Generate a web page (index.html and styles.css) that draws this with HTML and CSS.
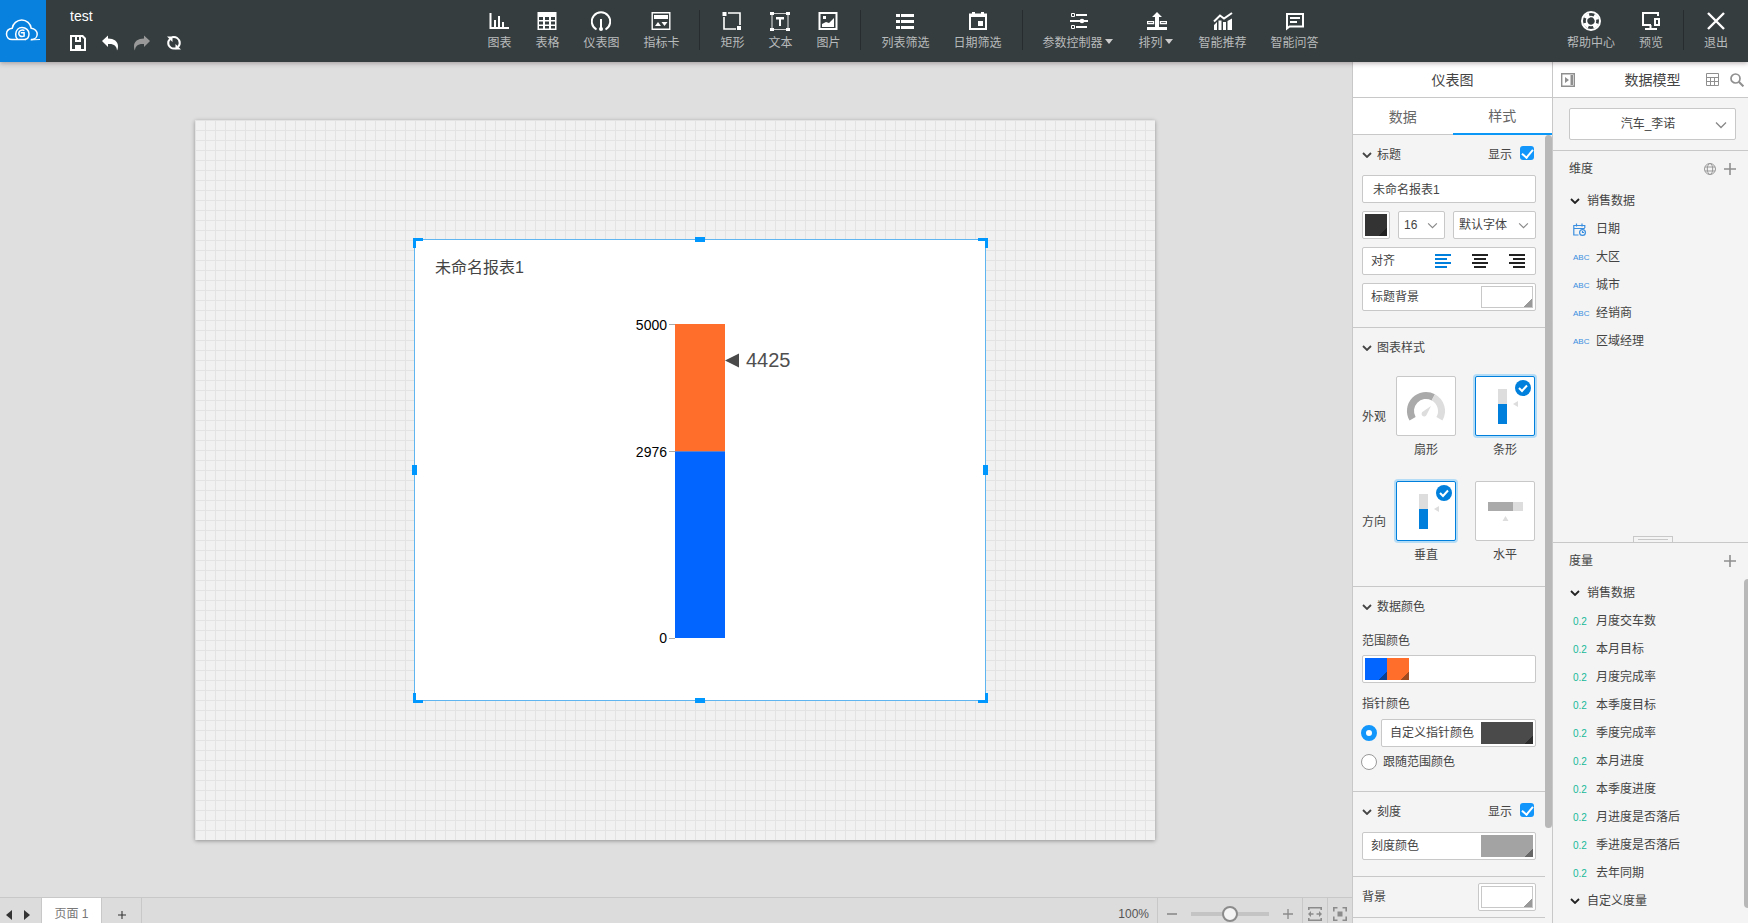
FILE: index.html
```html
<!DOCTYPE html>
<html lang="zh-CN">
<head>
<meta charset="utf-8">
<title>test</title>
<link rel="stylesheet" href="styles.css">
</head>
<body>
<svg class="defs" aria-hidden="true">
  <symbol id="chev" viewBox="0 0 10 6"><path d="M1 1l4 4 4-4" fill="none" stroke="currentColor" stroke-width="1.8"/></symbol>
  <symbol id="chev-thin" viewBox="0 0 12 8"><path d="M1 1.5l5 5 5-5" fill="none" stroke="currentColor" stroke-width="1.3"/></symbol>
  <symbol id="plus" viewBox="0 0 12 12"><path d="M6 0v12M0 6h12" stroke="currentColor" stroke-width="1.6"/></symbol>
  <symbol id="vertical-bar" viewBox="0 0 60 60"><path d="M23 13h9v15h-9z" fill="#ddd"/><path d="M23 28h9v20h-9z" fill="#0080dc"/><path d="M38 28l5-3v6z" fill="#ddd"/><circle cx="48" cy="12" r="8" fill="#0080dc"/><path d="M44 12l3 3 5-5.500" fill="none" stroke="#fff" stroke-width="2"/></symbol>
</svg>
<header class="topbar">
  <a class="logo" href="#" aria-label="首页">
    <svg width="36" height="24" viewBox="0 0 36 24" fill="none" stroke="#fff" stroke-width="1.5"><path d="M21 20.500H7C3.500 20.500 1.500 18 1.500 15c0-3 2.300-5.300 5.800-5.800C7.800 4.500 12 1 16.800 1s8.700 3.500 9.400 8.200c3.600.3 6 3 6 5.800 0 3-2.200 5.300-5 5.500H26"/><path d="M25.500 20.900L35 20.500" stroke-width="1"/><path d="M12.500 20.300c-1.500-1.600-2-3.300-1.800-5.300.3-4 3-6.500 6.300-6.500 4 0 7 2.800 7 6.200 0 3-1.500 5.300-4 5.800"/><path d="M19.500 11.500c-2.500-1.200-5.500 0-5.700 2.600-.2 2.600 2 4.100 5.300 3v-3.400h-3.300"/></svg>
  </a>
  <div class="doc">
    <div class="doc-name">test</div>
    <div class="doc-actions">
      <button aria-label="保存"><svg width="16" height="16" viewBox="0 0 16 16"><path fill="#fff" fill-rule="evenodd" d="M0 0h13l3 3v13H0zM2 2v12h3v-4h6v4h3V4l-2-2h-1v5H5V2zM7 2v3h2V2z"/></svg></button>
      <button aria-label="撤销"><svg width="16" height="16" viewBox="0 0 16 16"><path fill="#fff" d="M0 6l6-5.500v3c6 0 10 3 10 7.500 0 2-.4 3.500-1 4.500-.2-4.500-3-7-9-6.500v3z"/></svg></button>
      <button aria-label="重做"><svg width="16" height="16" viewBox="0 0 16 16"><path fill="#999" d="M16 6l-6-5.500v3C4 3.500 0 6.500 0 11c0 2 .4 3.500 1 4.500C1.200 11 4 8.500 10 9v3z"/></svg></button>
      <button aria-label="刷新"><svg width="16" height="16" viewBox="0 0 16 16"><path fill="none" stroke="#fff" stroke-width="2" d="M6 2.200a5.800 5.800 0 0 1 7.600 5.300M2.200 7.500A5.800 5.800 0 0 0 10 13.200M2.200 8.500A5.800 5.800 0 0 1 4 4M13.600 6.500a5.800 5.800 0 0 1-1.600 5.500"/><path fill="#fff" d="M1 1.500h5.500V7zM15 14.500H9.500V9z"/></svg></button>
    </div>
  </div>
  <nav class="tools">
    <button class="tool"><svg viewBox="0 0 20 20"><path fill="none" stroke="#fff" stroke-width="2" d="M1.500 2v15H20M6 9v7M10 5v11M14 11v5"/></svg><span>图表</span></button>
    <button class="tool"><svg viewBox="0 0 20 20"><path fill="#fff" fill-rule="evenodd" d="M.500 1h19v18h-19zM2 6v3h4V6zM8 6v3h4V6zM14 6v3h4V6zM2 10.500v3h4v-3zM8 10.500v3h4v-3zM14 10.500v3h4v-3zM2 15v2.500h4V15zM8 15v2.500h4V15zM14 15v2.500h4V15z"/></svg><span>表格</span></button>
    <button class="tool"><svg viewBox="0 0 20 20"><path fill="none" stroke="#fff" stroke-width="2" d="M5.500 18.500A9.200 9.200 0 1 1 14.500 18.500M10 8v9"/><circle cx="10" cy="18" r="2" fill="#fff"/></svg><span>仪表图</span></button>
    <button class="tool"><svg viewBox="0 0 20 20"><path fill="none" stroke="#fff" stroke-width="1.4" d="M1.200 1.700h17.600v16.600H1.200z"/><path fill="#fff" d="M3 4h14v4H3zM4 15l3-4 3 4zM10.500 11h6l-3 4z"/></svg><span>指标卡</span></button>
    <i class="sep"></i>
    <button class="tool"><svg viewBox="0 0 20 20"><path fill="none" stroke="#fff" stroke-width="1.600" d="M6 2h12v12M14 18H2V6"/><path fill="#fff" d="M.500 1h4v4h-4zM15 15h4v4h-4z"/></svg><span>矩形</span></button>
    <button class="tool"><svg viewBox="0 0 20 20"><path fill="none" stroke="#ccc" stroke-width="1.200" d="M2 2.500h16v16H2z"/><path fill="#fff" d="M0 1h4v3H0zM16 1h4v3h-4zM0 17h4v3H0zM16 17h4v3h-4zM6 6h8v2.500h-3V15H9V8.500H6z"/></svg><span>文本</span></button>
    <button class="tool"><svg viewBox="0 0 20 20"><path fill="none" stroke="#fff" stroke-width="2" d="M1.500 2h17v16h-17z"/><path fill="#fff" d="M4 16v-3l4-2 3 1 5-5v9zM5 5h3v3H5z"/></svg><span>图片</span></button>
    <i class="sep"></i>
    <button class="tool"><svg viewBox="0 0 20 20"><path fill="#fff" d="M1 3h4v3H1zM6 3h13v3H6zM1 9h4v3H1zM6 9h13v3H6zM1 15h4v3H1zM6 15h13v3H6z"/></svg><span>列表筛选</span></button>
    <button class="tool"><svg viewBox="0 0 20 20"><path fill="#fff" fill-rule="evenodd" d="M1 2.500h3V1h3v1.500h6V1h3v1.500h3V19H1zM3 6v11h14V6zM10 10h5v5h-5z"/></svg><span>日期筛选</span></button>
    <i class="sep"></i>
    <button class="tool"><svg viewBox="0 0 20 20"><path fill="#fff" d="M7 3h11v2H7zM1 9h18v2H1zM7 15h11v2H7z"/><circle cx="13" cy="10" r="2.300" fill="#fff"/><path fill="none" stroke="#fff" d="M2.500 2.500h3v3h-3zM2.500 14.500h3v3h-3z"/></svg><span class="more">参数控制器</span></button>
    <button class="tool"><svg viewBox="0 0 20 20"><path fill="#fff" d="M10 1l5 5h-3v11H8V6H5zM0 16h20v3H0z"/><path fill="none" stroke="#fff" stroke-width="1.200" d="M.600 10.600h6v2h-6zM13.400 10.600h6v2h-6z"/></svg><span class="more">排列</span></button>
    <button class="tool"><svg viewBox="0 0 20 20"><path fill="none" stroke="#fff" stroke-width="2" d="M1 10.500l6-6 4 3 8-5.500"/><path fill="#fff" d="M1 19v-5l3-3v8zM5.500 19V9.500h3V19zM10 19v-8h3v8zM14.500 19v-9L19 7.500V19z"/></svg><span>智能推荐</span></button>
    <button class="tool"><svg viewBox="0 0 20 20"><path fill="none" stroke="#fff" stroke-width="2" d="M2 17.500V3h16v12.500H4.500z"/><path fill="#fff" d="M5 6h10v2H5zM5 10h7v2H5z"/></svg><span>智能问答</span></button>
  </nav>
  <nav class="tools tools-right">
    <button class="tool"><svg viewBox="0 0 20 20"><circle cx="10" cy="10" r="9" fill="none" stroke="#fff" stroke-width="2"/><circle cx="10" cy="10" r="6" fill="none" stroke="#fff" stroke-width="4.500" stroke-dasharray="4.700 4.725" stroke-dashoffset="-2.300"/><circle cx="10" cy="10" r="4.500" fill="none" stroke="#fff" stroke-width="1.500"/></svg><span>帮助中心</span></button>
    <button class="tool"><svg viewBox="0 0 20 20"><path fill="none" stroke="#fff" stroke-width="2" d="M17 5V2H2v12h8M9.500 14v4M4 18h12M14 8h4v6h-4z"/></svg><span>预览</span></button>
    <i class="sep"></i>
    <button class="tool"><svg viewBox="0 0 20 20"><path fill="none" stroke="#fff" stroke-width="2.400" d="M2 2l16 16M18 2L2 18"/></svg><span>退出</span></button>
  </nav>
</header>

<div class="body">
  <main class="workspace">
    <div class="stage">
      <div class="page">
        <section class="chart">
          <h1>未命名报表1</h1>
          <svg class="gauge" viewBox="0 0 570 460" role="img" aria-label="4425">
            <path d="M260 84h50v127h-50z" fill="#ff6e2b"/><path d="M260 211h50v187h-50z" fill="#0365ff"/>
            <path d="M254 84.500h6M254 211.500h6M254 398.500h6" stroke="#aaa"/><path d="M260 211.500h50" stroke="#667fc0"/>
            <path d="M310 120.500l14-7v14z" fill="#4a4a4a"/>
            <g font-size="14" text-anchor="end"><text x="252" y="90">5000</text><text x="252" y="217">2976</text><text x="252" y="403">0</text></g>
            <text x="331" y="127" font-size="20" fill="#4f4f4f">4425</text>
          </svg>
          <i class="corner tl"></i><i class="corner tr"></i><i class="corner bl"></i><i class="corner br"></i>
          <i class="mid top"></i><i class="mid bottom"></i><i class="mid left"></i><i class="mid right"></i>
        </section>
      </div>
    </div>
    <footer class="statusbar">
      <div class="cell pager">
        <button aria-label="上一页"><svg width="6" height="10" viewBox="0 0 6 10"><path d="M6 0v10L0 5z" fill="#333"/></svg></button>
        <button aria-label="下一页"><svg width="6" height="10" viewBox="0 0 6 10"><path d="M0 0v10l6-5z" fill="#333"/></svg></button>
      </div>
      <button class="cell sheet">页面 1</button>
      <button class="cell add" aria-label="添加页面"><svg width="8" height="8"><use href="#plus"/></svg></button>
      <div class="cell percent">100%</div>
      <div class="cell zoom">
        <button aria-label="缩小"><svg width="10" height="10" viewBox="0 0 10 10"><path d="M0 5h10" stroke="#8b8b8b" stroke-width="1.600"/></svg></button>
        <input type="range" aria-label="缩放" value="50">
        <button aria-label="放大"><svg width="10" height="10"><use href="#plus"/></svg></button>
      </div>
      <button class="cell fit" aria-label="适应宽度"><svg width="14" height="14" viewBox="0 0 14 14"><path d="M.800 3V.800h12.400V3M.800 11v2.200h12.400V11" fill="none" stroke="#8b8b8b" stroke-width="1.600"/><path d="M0 7l3-3v2.200h2.500v1.600H3V10zM14 7l-3-3v2.200H8.500v1.600H11V10z" fill="#8b8b8b"/></svg></button>
      <button class="cell fit" aria-label="适应页面"><svg width="14" height="14" viewBox="0 0 14 14"><path d="M.800 4.500V.800h3.700M9.500.800h3.700v3.700M13.200 9.500v3.700H9.500M4.500 13.200H.800V9.500" fill="none" stroke="#8b8b8b" stroke-width="1.600"/><path d="M4.500 4.500h5v5h-5z" fill="#8b8b8b"/></svg></button>
    </footer>
  </main>

  <aside class="style-panel">
    <h2 class="panel-title">仪表图</h2>
    <div class="tabs"><button>数据</button><button class="on">样式</button></div>
    <div class="scroll">
      <div class="sections">
        <section class="sec">
          <div class="sec-head"><svg class="chev"><use href="#chev"/></svg><h3>标题</h3><label>显示<input type="checkbox" checked></label></div>
          <div class="stack">
            <input class="box field" type="text" value="未命名报表1" aria-label="标题">
            <div class="font-row">
              <div class="box swatch-box square"><button class="swatch dark" aria-label="文字颜色"></button></div>
              <div class="box pick size"><select aria-label="字号"><option>16</option></select><svg><use href="#chev-thin"/></svg></div>
              <div class="box pick family"><select aria-label="字体"><option>默认字体</option></select><svg><use href="#chev-thin"/></svg></div>
            </div>
            <div class="box line align"><span>对齐</span>
              <button class="on" aria-label="左对齐"><svg width="16" height="14"><path d="M0 1h16M0 5h12M0 9h16M0 13h12" stroke="currentColor" stroke-width="2"/></svg></button>
              <button aria-label="居中"><svg width="16" height="14"><path d="M0 1h16M2 5h12M0 9h16M2 13h12" stroke="currentColor" stroke-width="2"/></svg></button>
              <button aria-label="右对齐"><svg width="16" height="14"><path d="M0 1h16M4 5h12M0 9h16M4 13h12" stroke="currentColor" stroke-width="2"/></svg></button>
            </div>
            <div class="box line"><span>标题背景</span><button class="swatch white" aria-label="标题背景"></button></div>
          </div>
        </section>
        <section class="sec looks">
          <div class="sec-head"><svg class="chev"><use href="#chev"/></svg><h3>图表样式</h3></div>
          <div class="options"><span class="name">外观</span>
            <button class="option"><span class="thumb"><svg viewBox="0 0 60 60"><path d="M16.600 42.800A15.500 15.500 0 0 1 37.300 21.300" fill="none" stroke="#aaa" stroke-width="7"/><path d="M37.300 21.300A15.500 15.500 0 0 1 43.400 42.800" fill="none" stroke="#ddd" stroke-width="7"/><path d="M35 30l-4.500 9a2.600 2.600 0 1 1-3.500-3.500z" fill="#ddd"/></svg></span>扇形</button>
            <button class="option on"><span class="thumb"><svg><use href="#vertical-bar"/></svg></span>条形</button>
          </div>
          <div class="options"><span class="name">方向</span>
            <button class="option on"><span class="thumb"><svg><use href="#vertical-bar"/></svg></span>垂直</button>
            <button class="option"><span class="thumb"><svg viewBox="0 0 60 60"><path d="M13 21h25v9H13z" fill="#aaa"/><path d="M38 21h10v9H38zM30.500 35l3 5h-6z" fill="#ddd"/></svg></span>水平</button>
          </div>
        </section>
        <section class="sec colors">
          <div class="sec-head"><svg class="chev"><use href="#chev"/></svg><h3>数据颜色</h3></div>
          <div class="caption">范围颜色</div>
          <div class="box swatch-box"><button class="swatch blue" aria-label="范围颜色 1"></button><button class="swatch orange" aria-label="范围颜色 2"></button></div>
          <div class="caption second">指针颜色</div>
          <div class="radio-row"><input type="radio" name="pointer" id="p1" checked><div class="box line"><label for="p1">自定义指针颜色</label><button class="swatch gray4" aria-label="指针颜色"></button></div></div>
          <div class="radio-row plain"><input type="radio" name="pointer" id="p2"><label for="p2">跟随范围颜色</label></div>
        </section>
        <section class="sec">
          <div class="sec-head"><svg class="chev"><use href="#chev"/></svg><h3>刻度</h3><label>显示<input type="checkbox" checked></label></div>
          <div class="box line"><span>刻度颜色</span><button class="swatch graya" aria-label="刻度颜色"></button></div>
        </section>
        <section class="sec background"><h3>背景</h3><div class="box swatch-box"><button class="swatch white" aria-label="背景"></button></div></section>
      </div>
      <div class="scrollbar"></div>
    </div>
  </aside>

  <aside class="data-panel">
    <div class="data-head">
      <button aria-label="收起"><svg width="14" height="14" viewBox="0 0 14 14"><path d="M.700.700h12.600v12.600H.700z" fill="none" stroke="#8f8f8f" stroke-width="1.400"/><path d="M4 4l4 3-4 3zM9.500 2H12v10H9.500z" fill="#8f8f8f"/></svg></button>
      <h2>数据模型</h2>
      <button aria-label="表格"><svg width="13" height="13" viewBox="0 0 13 13"><path d="M.500.500h12v12H.500zM.500 4.500h12M.500 8.500h12M4.500 4.500v8M8.500 4.500v8" fill="none" stroke="#8f8f8f"/></svg></button>
      <button aria-label="搜索"><svg width="14" height="14" viewBox="0 0 14 14"><circle cx="5.500" cy="5.500" r="4.500" fill="none" stroke="#8f8f8f" stroke-width="1.700"/><path d="M8.800 8.800l4.600 4.600" stroke="#8f8f8f" stroke-width="2"/></svg></button>
    </div>
    <div class="model"><div class="box pick"><select aria-label="数据模型"><option>汽车_李诺</option></select><svg><use href="#chev-thin"/></svg></div></div>
    <section class="dims">
      <div class="group-head"><h3>维度</h3><button aria-label="地理"><svg width="12" height="12" viewBox="0 0 12 12" fill="none" stroke="#999"><circle cx="6" cy="6" r="5.500"/><ellipse cx="6" cy="6" rx="2.700" ry="5.500"/><path d="M1 4h10M1 8h10"/></svg></button><button aria-label="添加维度"><svg width="12" height="12"><use href="#plus"/></svg></button></div>
      <div class="folder"><svg class="chev"><use href="#chev"/></svg>销售数据</div>
      <ul>
        <li><svg class="kind" viewBox="0 0 13 13" fill="none" stroke="#3a8ee0" stroke-width="1.200"><path d="M5.500 12H.800V2.500h11v2.500M.800 5.500h11M3.500.500v3M9 .500v3"/><circle cx="9.500" cy="9.500" r="2.900"/><path d="M9.500 8v1.500H11"/></svg>日期</li>
        <li><b class="kind abc">ABC</b>大区</li><li><b class="kind abc">ABC</b>城市</li><li><b class="kind abc">ABC</b>经销商</li><li><b class="kind abc">ABC</b>区域经理</li>
      </ul>
      <div class="grip"></div>
    </section>
    <section class="measures">
      <div class="group-head"><h3>度量</h3><button aria-label="添加度量"><svg width="12" height="12"><use href="#plus"/></svg></button></div>
      <div class="folder"><svg class="chev"><use href="#chev"/></svg>销售数据</div>
      <ul>
        <li><b class="kind num">0.2</b>月度交车数</li><li><b class="kind num">0.2</b>本月目标</li><li><b class="kind num">0.2</b>月度完成率</li><li><b class="kind num">0.2</b>本季度目标</li><li><b class="kind num">0.2</b>季度完成率</li><li><b class="kind num">0.2</b>本月进度</li><li><b class="kind num">0.2</b>本季度进度</li><li><b class="kind num">0.2</b>月进度是否落后</li><li><b class="kind num">0.2</b>季进度是否落后</li><li><b class="kind num">0.2</b>去年同期</li>
      </ul>
      <div class="folder"><svg class="chev"><use href="#chev"/></svg>自定义度量</div>
      <div class="scrollbar"></div>
    </section>
  </aside>
</div>
</body>
</html>
```
FILE: styles.css
```css
* { box-sizing: border-box; }
body { margin: 0; height: 100vh; display: flex; flex-direction: column; overflow: hidden; font: 12px/20px "Liberation Sans", "Noto Sans CJK SC", sans-serif; color: #444; }
button, input, select { font: inherit; color: inherit; }
button { border: 0; padding: 0; background: none; display: flex; align-items: center; justify-content: center; flex: none; }
h1, h2, h3, ul { margin: 0; padding: 0; font-weight: normal; font-size: inherit; list-style: none; }
svg { display: block; flex: none; }
.defs { position: absolute; width: 0; height: 0; }

.topbar { position: relative; z-index: 2; display: grid; grid-template-columns: 46px 430fr auto 418fr; height: 62px; flex: none; background: #363d3f; box-shadow: 0 1px 5px rgba(60, 40, 50, .4); color: #fff; }
.logo { background: #0881de; display: flex; align-items: center; justify-content: center; }
.doc { padding: 6px 0 0 24px; }
.doc-name { font-size: 14px; }
.doc-actions { display: flex; gap: 16px; padding-top: 9px; }
.tools { display: flex; padding-top: 10px; }
.tools-right { justify-content: flex-end; padding-right: 8px; }
.tool { flex-direction: column; justify-content: flex-start; gap: 2px; padding: 1px 12px 0; height: 44px; color: #b8bbbc; white-space: nowrap; }
.tool svg { width: 20px; height: 20px; }
.sep { width: 1px; height: 40px; margin: 0 8px; background: #272c2e; }
.more { display: flex; gap: 2px; padding-right: 2px; }
.more::after { content: ""; margin-top: 6px; height: 0; border: 4px solid transparent; border-top: 5px solid #ccc; border-bottom: 0; }

.body { flex: 1; min-height: 0; display: flex; }
.workspace { flex: 1; min-width: 0; display: flex; flex-direction: column; background: #dfdfdf; }
.stage { flex: 1; min-height: 0; display: flex; align-items: center; justify-content: center; padding-right: 2px; overflow: hidden; }
.page { position: relative; flex: none; width: 960px; height: 720px; background: linear-gradient(#e3e3e3 1px, transparent 1px) 0 0 / 10px 10px, linear-gradient(90deg, #e3e3e3 1px, transparent 1px) 0 0 / 10px 10px #f1f1f1; box-shadow: 0 1px 4px rgba(0, 0, 0, .35); }
.chart { position: absolute; left: 219px; top: 119px; width: 572px; height: 462px; background: #fff; border: 1px solid #5fb5f0; }
.chart h1 { padding: 16px 20px; font-size: 16px; line-height: 24px; }
.gauge { position: absolute; inset: 0; width: 100%; height: 100%; }
.corner, .mid { position: absolute; background: #0098ff; }
.corner { width: 10px; height: 10px; background: none; border: 0 solid #0098ff; }
.tl { left: -2px; top: -2px; border-width: 3px 0 0 3px; }
.tr { right: -3px; top: -2px; border-width: 3px 3px 0 0; }
.bl { left: -2px; bottom: -3px; border-width: 0 0 3px 3px; }
.br { right: -3px; bottom: -3px; border-width: 0 3px 3px 0; }
.top, .bottom { left: calc(50% - 5px); width: 10px; height: 5px; }
.left, .right { top: calc(50% - 5px); width: 5px; height: 10px; }
.top { top: -3px; } .bottom { bottom: -3px; } .left { left: -3px; } .right { right: -3px; }

.statusbar { flex: none; display: flex; align-items: flex-start; height: 26px; overflow: hidden; border-top: 1px solid #c8c8c8; background: #dcdcdc; color: #777; }
.cell { display: flex; align-items: center; justify-content: center; height: 32px; border-right: 1px solid #c8c8c8; }
.pager { width: 42px; gap: 12px; padding-right: 5px; padding-top: 2px; }
.sheet { width: 60px; background: #fff; }
.add { width: 40px; padding-top: 2px; color: #333; }
.percent { flex: 1; justify-content: flex-end; padding-right: 8px; color: #555; }
.zoom { width: 145px; gap: 14px; color: #8b8b8b; }
.zoom input { appearance: none; width: 78px; height: 16px; margin: 0; background: linear-gradient(#c4c4c4, #c4c4c4) center / 100% 4px no-repeat; }
.zoom input::-webkit-slider-thumb { appearance: none; width: 16px; height: 16px; border: 2px solid #8b8b8b; border-radius: 50%; background: #f4f4f4; }
.fit { width: 25px; }
.fit:last-child { width: 24px; border-right: 0; }

.style-panel { width: 200px; flex: none; display: flex; flex-direction: column; border-left: 1px solid #c8c8c8; background: #f4f4f4; }
.panel-title { height: 36px; flex: none; line-height: 36px; text-align: center; font-size: 14px; background: #fff; border-bottom: 1px solid #c8c8c8; }
.tabs { display: flex; flex: none; height: 37px; background: #fff; border-bottom: 1px solid #c8c8c8; }
.tabs button { flex: 1; height: 37px; font-size: 14px; color: #666; }
.tabs .on { border-bottom: 2px solid #0b97f5; }
.scroll { flex: 1; min-height: 0; display: flex; overflow: hidden; }
.sections { flex: 1; min-width: 0; }
.style-panel .scrollbar { width: 7px; height: 88%; background: #b8b8b8; border-radius: 4px; }
.sec { padding: 0 9px 16px; border-bottom: 1px solid #c8c8c8; }
.sec-head { display: flex; align-items: center; height: 40px; }
.chev { width: 10px; height: 6px; margin-right: 5px; }
.sec-head h3 { flex: 1; }
.sec-head label { display: flex; align-items: center; gap: 8px; padding-right: 2px; }
input[type=checkbox] { appearance: none; width: 14px; height: 14px; margin: 0 0 4px; border-radius: 3px; background: #1296fb; display: flex; justify-content: center; }
input[type=checkbox]::after { content: ""; width: 5px; height: 9px; margin-top: 1px; border: solid #fff; border-width: 0 2px 2px 0; transform: rotate(40deg); }
.box { height: 28px; background: #fff; border: 1px solid #c8c8c8; border-radius: 2px; }
.stack { display: flex; flex-direction: column; gap: 8px; }
.field { width: 100%; padding: 0 10px 2px; outline: 0; }
.font-row { display: flex; gap: 8px; }
.swatch-box { display: flex; padding: 2px; }
.swatch { width: 22px; height: 22px; }
.dark { background: linear-gradient(135deg, transparent 50%, #222 50%) right bottom / 8px 8px no-repeat #333; }
.blue { background: linear-gradient(135deg, transparent 50%, #0a4193 50%) right bottom / 8px 8px no-repeat #0365ff; }
.orange { background: linear-gradient(135deg, transparent 50%, #a04a22 50%) right bottom / 8px 8px no-repeat #ff6e2b; }
.white, .gray4, .graya { width: 52px; }
.white { border: 1px solid #c8c8c8; background: linear-gradient(135deg, transparent 50%, #999 50%) right bottom / 8px 8px no-repeat #fff; }
.gray4 { background: linear-gradient(135deg, transparent 50%, #2c2c2c 50%) right bottom / 8px 8px no-repeat #4a4a4a; }
.graya { background: linear-gradient(135deg, transparent 50%, #666 50%) right bottom / 8px 8px no-repeat #a3a3a3; }
.pick { position: relative; }
.pick select { appearance: none; width: 100%; height: 100%; border: 0; background: none; padding: 0 5px; outline: 0; display: block; }
.pick svg { position: absolute; right: 6px; top: calc(50% - 3px); width: 11px; height: 7px; color: #888; pointer-events: none; }
.size { width: 47px; } .family { flex: 1; }
.line { display: flex; align-items: center; padding: 0 2px 0 8px; }
.line > :first-child { flex: 1; }
.align { gap: 21px; padding-right: 10px; color: #222; }
.align span { color: #444; }
.align .on { color: #0080dc; }
.looks { padding-bottom: 8px; }
.options { display: flex; align-items: flex-start; padding-top: 8px; height: 105px; }
.name { width: 34px; padding-top: 31px; }
.option { display: block; width: 60px; }
.option + .option { margin-left: 19px; }
.thumb { display: block; height: 60px; margin-bottom: 4px; background: #fff; border: 1px solid #c8c8c8; border-radius: 2px; }
.thumb svg { width: 60px; height: 60px; margin: -1px; }
.option.on .thumb { border-color: #0080dc; box-shadow: 0 0 0 2px #b5dcf6; }
.colors { padding-bottom: 19px; }
.colors .caption { padding: 4px 0; }
.colors .second { padding: 11px 0 5px; }
.radio-row { display: flex; align-items: center; gap: 4px; }
.radio-row .box { flex: 1; }
.radio-row.plain { padding-top: 5px; gap: 6px; }
input[type=radio] { appearance: none; width: 16px; height: 16px; margin: 0 0 0 -1px; border: 1px solid #999; border-radius: 50%; background: #fff; }
input[type=radio]:checked { border: 5px solid #1296fb; }
.background { display: flex; justify-content: space-between; align-items: center; padding: 6px 9px; }

.data-panel { width: 196px; flex: none; display: flex; flex-direction: column; border-left: 1px solid #c8c8c8; background: #f4f4f4; }
.data-head { display: flex; align-items: center; gap: 11px; height: 36px; flex: none; padding: 0 4px 0 8px; background: #fff; border-bottom: 1px solid #c8c8c8; }
.data-head h2 { flex: 1; padding-left: 24px; text-align: center; font-size: 14px; }
.model { flex: none; padding: 10px 12px 10px 16px; border-bottom: 1px solid #c8c8c8; }
.model .box { height: 32px; }
.model select { text-align-last: center; padding-right: 14px; }
.model .pick svg { right: 8px; width: 12px; height: 8px; }
.dims { position: relative; height: 392px; flex: 0 1 auto; padding-top: 8px; border-bottom: 1px solid #c8c8c8; }
.group-head { display: flex; align-items: center; gap: 8px; height: 20px; padding: 0 12px 0 16px; color: #8f8f8f; }
.group-head h3 { flex: 1; color: #444; }
.folder { display: flex; align-items: center; height: 28px; padding-left: 17px; }
.folder .chev { margin-right: 7px; color: #222; }
.group-head + .folder { margin-top: 8px; }
li { display: flex; align-items: center; height: 28px; padding-left: 20px; }
.kind { width: 13px; height: 13px; margin-right: 10px; font-weight: normal; line-height: 14px; white-space: nowrap; }
.abc, .num { font-family: "Liberation Sans Narrow", "Liberation Sans", sans-serif; }
.abc { font-size: 8px; color: #3a8ee0; }
.num { font-size: 10px; color: #16b999; }
.grip { position: absolute; left: calc(50% - 18px); bottom: 0; width: 40px; height: 6px; border: 1px solid #c8c8c8; border-bottom: 0; padding: 2px 4px; }
.grip::after { content: ""; display: block; height: 1px; background: #c8c8c8; }
.measures { position: relative; flex: 1; min-height: 0; padding-top: 8px; overflow: hidden; }
.measures .scrollbar { position: absolute; right: 0; top: 36px; bottom: 15px; width: 4px; border-radius: 4px 0 0 4px; background: #b8b8b8; }
```
